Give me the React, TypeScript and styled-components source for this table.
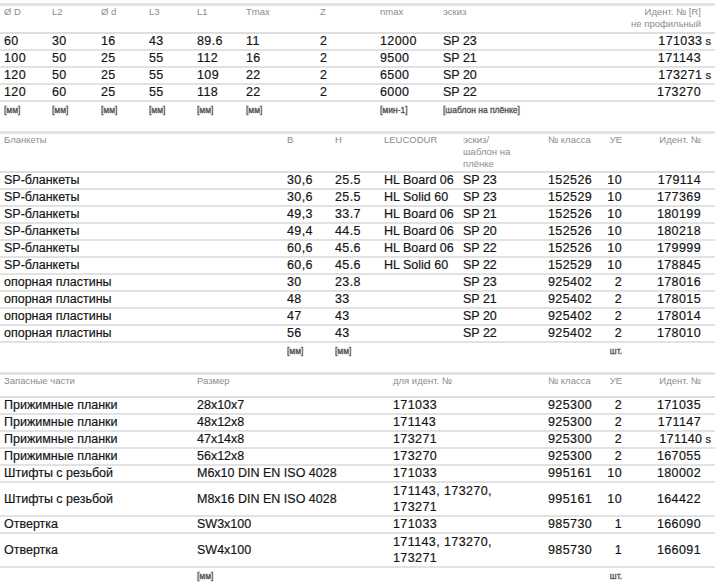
import React from 'react';
import styled, { createGlobalStyle } from 'styled-components';

type Col = { w: string; right?: boolean; end?: number };
type Value = string | { text: string; suffix?: string; lines?: string[] };

const GlobalStyle = createGlobalStyle`
  html, body {
    margin: 0;
    padding: 0;
    background: #fff;
  }
  body {
    font-family: "Liberation Sans", Arial, sans-serif;
    color: #141414;
  }
`;

const Page = styled.div`
  width: 715px;
  padding-top: 3px;
`;

const Table = styled.section`
  border-top: 3px solid #e4e4e4;
  margin-bottom: 14px;
`;

const HeadRow = styled.div<{ $cols: string; $h: number }>`
  display: grid;
  grid-template-columns: ${p => p.$cols};
  align-items: start;
  height: ${p => p.$h}px;
  border-bottom: 2px solid #dedede;
  font-size: 9.5px;
  line-height: 12px;
  color: #8c8c8c;
`;

const Row = styled.div<{ $cols: string }>`
  display: grid;
  grid-template-columns: ${p => p.$cols};
  align-items: center;
  min-height: 15px;
  border-bottom: 2px solid #e2e2e2;
  font-size: 12.5px;
  line-height: 15px;
  -webkit-text-stroke: 0.18px currentColor;
`;

const UnitRow = styled.div<{ $cols: string }>`
  display: grid;
  grid-template-columns: ${p => p.$cols};
  align-items: center;
  height: 15px;
  font-size: 8.5px;
  color: #555;
  -webkit-text-stroke: 0.35px currentColor;
`;

const Cell = styled.div<{ $right?: boolean; $end?: number; $num?: boolean }>`
  padding: ${p => (p.$right ? `0 ${p.$end ?? 4}px 0 0` : '0 0 0 4px')};
  text-align: ${p => (p.$right ? 'right' : 'left')};
  white-space: nowrap;
  letter-spacing: ${p => (p.$num ? '0.4px' : 'normal')};
`;

const Lines = styled.div`
  line-height: 16px;
`;

const Suffix = styled.span`
  font-size: 11px;
  letter-spacing: 0;
  margin-right: -10px;
`;

const isNum = (v: string) => /^[\d.,\s]+$/.test(v);

const renderValue = (v: Value) => {
  if (typeof v === 'string') return v;
  if (v.lines) {
    return (
      <Lines>
        {v.lines.map((l, i) => (
          <div key={i}>{l}</div>
        ))}
      </Lines>
    );
  }
  return (
    <>
      {v.text}
      {v.suffix && <Suffix> {v.suffix}</Suffix>}
    </>
  );
};

const numeric = (v: Value) =>
  typeof v === 'string' ? isNum(v) : v.lines ? true : isNum(v.text);

interface DataTableProps {
  cols: Col[];
  head: string[];
  headHeight: number;
  rows: Value[][];
  units: string[];
}

const DataTable = ({ cols, head, headHeight, rows, units }: DataTableProps) => {
  const template = cols.map(c => c.w).join(' ');
  return (
    <Table>
      <HeadRow $cols={template} $h={headHeight}>
        {head.map((h, i) => (
          <Cell key={i} $right={cols[i].right} $end={cols[i].end}>
            {h.split('\n').map((line, j) => (
              <div key={j}>{line}</div>
            ))}
          </Cell>
        ))}
      </HeadRow>
      {rows.map((r, ri) => (
        <Row key={ri} $cols={template}>
          {r.map((v, i) => (
            <Cell key={i} $right={cols[i].right} $end={cols[i].end} $num={numeric(v)}>
              {renderValue(v)}
            </Cell>
          ))}
        </Row>
      ))}
      <UnitRow $cols={template}>
        {units.map((u, i) => (
          <Cell key={i} $right={cols[i].right} $end={cols[i].end}>
            {u}
          </Cell>
        ))}
      </UnitRow>
    </Table>
  );
};

const IDENT: Col = { w: '1fr', right: true, end: 14 };
const UE: Col = { w: '22px', right: true, end: 4 };

const cutterCols: Col[] = [
  { w: '48px' },
  { w: '49px' },
  { w: '48px' },
  { w: '48px' },
  { w: '49px' },
  { w: '74px' },
  { w: '60px' },
  { w: '63px' },
  { w: '121px' },
  IDENT,
];

const blankCols: Col[] = [
  { w: '283px' },
  { w: '48px' },
  { w: '49px' },
  { w: '79px' },
  { w: '85px' },
  { w: '60px' },
  UE,
  IDENT,
];

const spareCols: Col[] = [
  { w: '193px' },
  { w: '196px' },
  { w: '155px' },
  { w: '60px' },
  UE,
  IDENT,
];

const cutters: Value[][] = [
  ['60', '30', '16', '43', '89.6', '11', '2', '12000', 'SP 23', { text: '171033', suffix: 's' }],
  ['100', '50', '25', '55', '112', '16', '2', '9500', 'SP 21', '171143'],
  ['120', '50', '25', '55', '109', '22', '2', '6500', 'SP 20', { text: '173271', suffix: 's' }],
  ['120', '60', '25', '55', '118', '22', '2', '6000', 'SP 22', '173270'],
];

const blanks: Value[][] = [
  ['SP-бланкеты', '30,6', '25.5', 'HL Board 06', 'SP 23', '152526', '10', '179114'],
  ['SP-бланкеты', '30,6', '25.5', 'HL Solid 60', 'SP 23', '152529', '10', '177369'],
  ['SP-бланкеты', '49,3', '33.7', 'HL Board 06', 'SP 21', '152526', '10', '180199'],
  ['SP-бланкеты', '49,4', '44.5', 'HL Board 06', 'SP 20', '152526', '10', '180218'],
  ['SP-бланкеты', '60,6', '45.6', 'HL Board 06', 'SP 22', '152526', '10', '179999'],
  ['SP-бланкеты', '60,6', '45.6', 'HL Solid 60', 'SP 22', '152529', '10', '178845'],
  ['опорная пластины', '30', '23.8', '', 'SP 23', '925402', '2', '178016'],
  ['опорная пластины', '48', '33', '', 'SP 21', '925402', '2', '178015'],
  ['опорная пластины', '47', '43', '', 'SP 20', '925402', '2', '178014'],
  ['опорная пластины', '56', '43', '', 'SP 22', '925402', '2', '178010'],
];

const multi = { text: '', lines: ['171143, 173270,', '173271'] };

const spares: Value[][] = [
  ['Прижимные планки', '28x10x7', '171033', '925300', '2', '171035'],
  ['Прижимные планки', '48x12x8', '171143', '925300', '2', '171147'],
  ['Прижимные планки', '47x14x8', '173271', '925300', '2', { text: '171140', suffix: 's' }],
  ['Прижимные планки', '56x12x8', '173270', '925300', '2', '167055'],
  ['Штифты с резьбой', 'M6x10 DIN EN ISO 4028', '171033', '995161', '10', '180002'],
  ['Штифты с резьбой', 'M8x16 DIN EN ISO 4028', multi, '995161', '10', '164422'],
  ['Отвертка', 'SW3x100', '171033', '985730', '1', '166090'],
  ['Отвертка', 'SW4x100', multi, '985730', '1', '166091'],
];

const App = () => (
  <Page>
    <GlobalStyle />
    <DataTable
      cols={cutterCols}
      headHeight={26}
      head={['Ø D', 'L2', 'Ø d', 'L3', 'L1', 'Tmax', 'Z', 'nmax', 'эскиз', 'Идент. № [R]\nне профильный']}
      rows={cutters}
      units={['[мм]', '[мм]', '[мм]', '[мм]', '[мм]', '[мм]', '', '[мин-1]', '[шаблон на плёнке]', '']}
    />
    <DataTable
      cols={blankCols}
      headHeight={37}
      head={['Бланкеты', 'B', 'H', 'LEUCODUR', 'эскиз/\nшаблон на\nплёнке', '№ класса', 'УЕ', 'Идент. №']}
      rows={blanks}
      units={['', '[мм]', '[мм]', '', '', '', 'шт.', '']}
    />
    <DataTable
      cols={spareCols}
      headHeight={21}
      head={['Запасные части', 'Размер', 'для идент. №', '№ класса', 'УЕ', 'Идент. №']}
      rows={spares}
      units={['', '[мм]', '', '', 'шт.', '']}
    />
  </Page>
);

export default App;
